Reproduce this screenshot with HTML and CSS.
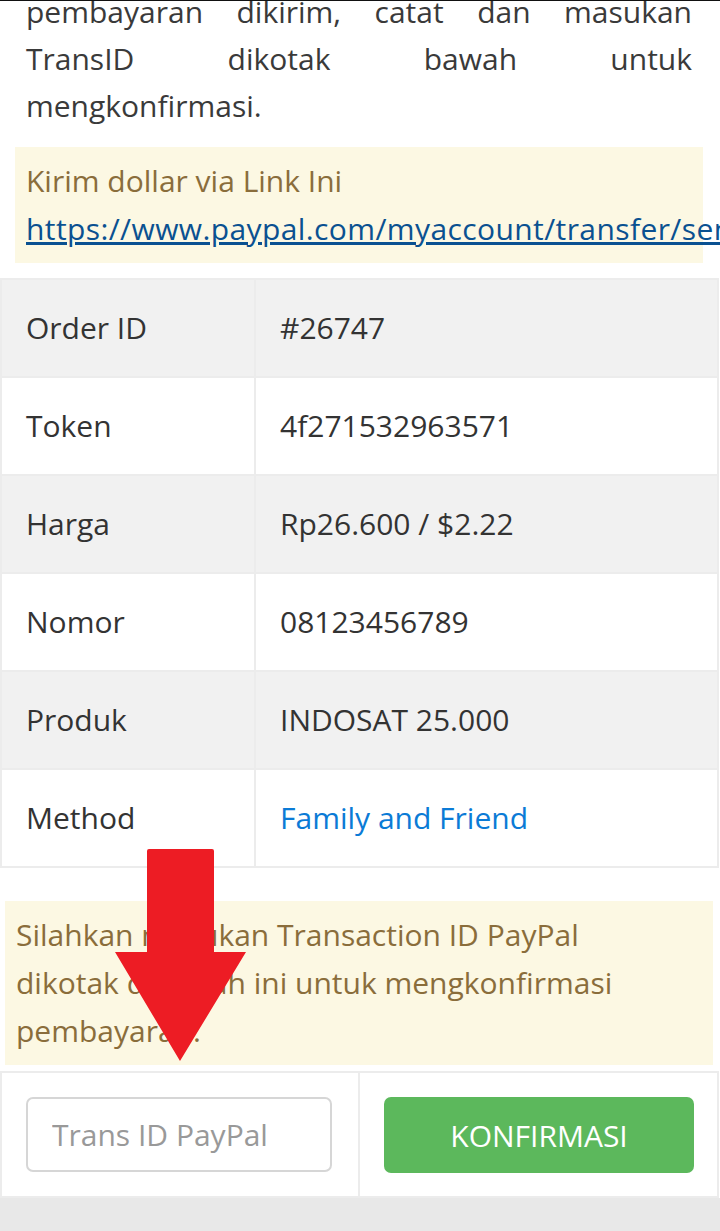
FILE: index.html
```html
<!DOCTYPE html>
<html lang="id">
<head>
<meta charset="utf-8">
<title>Konfirmasi Pembayaran PayPal</title>
<link rel="stylesheet" href="styles.css">
</head>
<body>
<div class="page">
  <p class="intro">
    <span class="jline">pembayaran dikirim, catat dan masukan</span>
    <span class="jline">TransID dikotak bawah untuk</span>
    <span class="lastline">mengkonfirmasi.</span>
  </p>

  <div class="alert alert-top">
    Kirim dollar via Link Ini<br>
    <a class="paylink" href="#">https://www.paypal.com/myaccount/transfer/send</a>
  </div>

  <table class="info">
    <tr class="odd"><td class="label">Order ID</td><td>#26747</td></tr>
    <tr><td class="label">Token</td><td>4f271532963571</td></tr>
    <tr class="odd"><td class="label">Harga</td><td>Rp26.600 / $2.22</td></tr>
    <tr><td class="label">Nomor</td><td>08123456789</td></tr>
    <tr class="odd"><td class="label">Produk</td><td>INDOSAT 25.000</td></tr>
    <tr><td class="label">Method</td><td><a class="method" href="#">Family and Friend</a></td></tr>
  </table>

  <div class="alert alert-bottom">
    Silahkan masukan Transaction ID PayPal<br>
    dikotak dibawah ini untuk mengkonfirmasi<br>
    pembayaran.
  </div>

  <form class="confirm">
    <div class="cell"><input class="transid" type="text" placeholder="Trans ID PayPal"></div>
    <div class="cell"><button class="btn" type="button">KONFIRMASI</button></div>
  </form>

  <svg class="arrow" width="131" height="212" viewBox="0 0 131 212">
    <path d="M34 0 H97 Q99 0 99 2 V103 H131 L65 212 L0 103 H32 V2 Q32 0 34 0 Z" fill="#ed1c24"/>
  </svg>
</div>
</body>
</html>
```
FILE: styles.css
```css
html, body {
  margin: 0;
  padding: 0;
  overflow: hidden;
}
body {
  background: #e8e8e8;
  font-family: "Open Sans", "Noto Sans", sans-serif;
  font-size: 30px;
  color: #333;
}
.page {
  position: relative;
  background: #fff;
  border-top: 1px solid #111;
}
.intro {
  margin: -13px 28px 0 26px;
  line-height: 47px;
  color: #3a3a3a;
}
.jline {
  display: block;
  text-align: justify;
  text-align-last: justify;
}
.lastline {
  display: block;
}
.alert {
  background: #fcf8e3;
  color: #8a6d3b;
  line-height: 48px;
  padding: 10px 11px;
}
.alert-top {
  margin: 18px 17px 0 15px;
  white-space: nowrap;
}
.paylink {
  color: #0a5191;
  text-decoration: underline;
  letter-spacing: 0.4px;
}
.info {
  margin-top: 15px;
  width: 719px;
  border-collapse: collapse;
  border: 2px solid #ececec;
}
.info td {
  border: 2px solid #ececec;
  height: 98px;
  padding: 0 24px;
  line-height: 48px;
  box-sizing: border-box;
}
.info td.label {
  width: 254px;
}
.info tr.odd td {
  background: #f1f1f1;
}
.method {
  color: #0b7bd6;
  text-decoration: none;
}
.alert-bottom {
  margin: 33px 7px 0 5px;
  padding: 10px 11px;
}
.confirm {
  margin: 6px 0 0 0;
  width: 719px;
  display: grid;
  grid-template-columns: 356px 1fr;
  border: 2px solid #ececec;
  box-sizing: border-box;
}
.cell {
  padding: 24px 24px 23px 24px;
}
.cell + .cell {
  border-left: 2px solid #ececec;
  padding-left: 24px;
}
.transid {
  display: block;
  box-sizing: border-box;
  width: 306px;
  height: 75px;
  border: 2px solid #d6d6d6;
  border-radius: 7px;
  padding: 0 24px;
  font: inherit;
  color: #555;
  background: #fff;
}
.transid::placeholder {
  color: #999;
}
.btn {
  display: block;
  box-sizing: border-box;
  width: 310px;
  height: 76px;
  border: none;
  border-radius: 7px;
  background: #5cb85c;
  color: #fff;
  font: inherit;
}
.arrow {
  position: absolute;
  left: 115px;
  top: 848px;
}
```
